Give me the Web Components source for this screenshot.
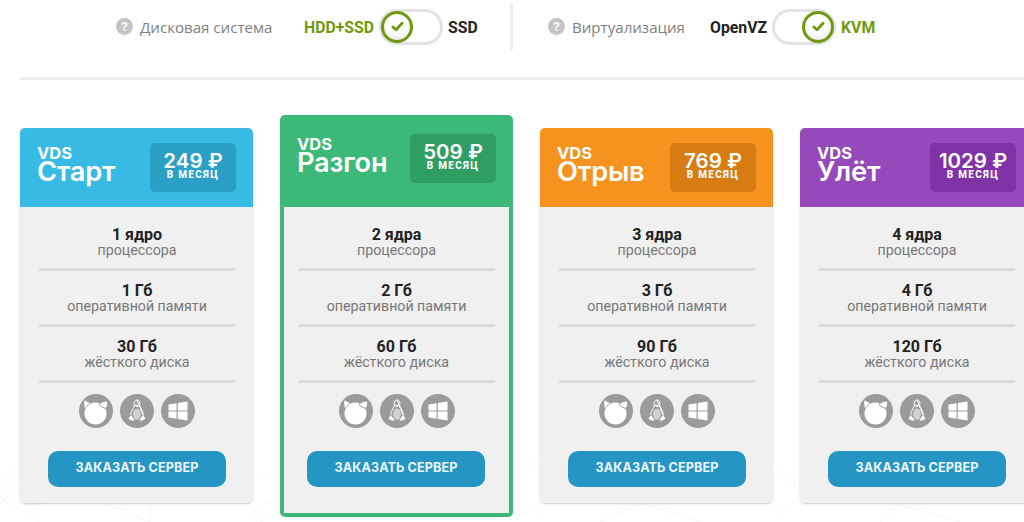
<!DOCTYPE html>
<html lang="ru">
<head>
<meta charset="utf-8">
<title>VDS</title>
<style>
  html, body { margin: 0; height: 522px; overflow: hidden; background: #fff; }
  body { font-family: "Roboto", "Liberation Sans", sans-serif; position: relative; }
</style>
</head>
<body>
<vds-backdrop></vds-backdrop>
<vds-filters>
  <vds-switch label="Дисковая система" left="HDD+SSD" right="SSD" active="left"></vds-switch>
  <vds-switch label="Виртуализация" left="OpenVZ" right="KVM" active="right"></vds-switch>
</vds-filters>
<vds-plans>
  <vds-plan name="Старт" price="249" color="#37bbe4" dark="#2ba0c6" cores="1 ядро" ram="1 Гб" disk="30 Гб"></vds-plan>
  <vds-plan name="Разгон" price="509" color="#3cb878" dark="#2e9e62" cores="2 ядра" ram="2 Гб" disk="60 Гб" featured></vds-plan>
  <vds-plan name="Отрыв" price="769" color="#f6921e" dark="#d67c12" cores="3 ядра" ram="3 Гб" disk="90 Гб"></vds-plan>
  <vds-plan name="Улёт" price="1029" color="#9549ba" dark="#7f33a6" cores="4 ядра" ram="4 Гб" disk="120 Гб"></vds-plan>
</vds-plans>

<script>
class VdsBackdrop extends HTMLElement {
  connectedCallback() {
    this.attachShadow({ mode: 'open' });
    this.shadowRoot.innerHTML = `
      <style>
        :host { position: absolute; left: 0; right: 0; bottom: 0; height: 100px; z-index: 0; }
        svg { display: block; }
      </style>
      <svg width="1024" height="100" viewBox="0 422 1024 100" fill="none" stroke="#f5f5f5" stroke-width="1">
        <path d="M0 505 L18 482 M0 488 L14 470 M40 522 L0 497 M150 522 L95 500 L20 505 M150 522 L150 495 L230 480 L262 522 M262 478 L275 470 M262 505 L275 500"/>
        <path d="M514 478 L538 462 M514 498 L540 515 M600 522 L640 503 L700 522 M775 470 L800 490 M775 515 L798 500 M880 522 L900 505 L960 522"/>
      </svg>`;
  }
}

class VdsFilters extends HTMLElement {
  connectedCallback() {
    this.attachShadow({ mode: 'open' });
    this.shadowRoot.innerHTML = `
      <style>
        :host { display: block; position: relative; z-index: 1; margin-left: 20px; height: 80px; box-sizing: border-box; border-bottom: 3px solid #eeeeee; }
        .row { display: grid; grid-template-columns: 493px 1fr; height: 47px; padding-top: 3px; }
        ::slotted(vds-switch:first-child) { padding-left: 96px; border-right: 3px solid #eeeeee; }
        ::slotted(vds-switch:last-child) { padding-left: 35px; }
      </style>
      <div class="row"><slot></slot></div>`;
  }
}

class VdsSwitch extends HTMLElement {
  connectedCallback() {
    const onRight = this.getAttribute('active') === 'right';
    this.attachShadow({ mode: 'open' });
    this.shadowRoot.innerHTML = `
      <style>
        :host { display: flex; align-items: center; box-sizing: border-box; height: 47px; }
        .help { width: 17px; height: 17px; border-radius: 50%; background: #c4c4c4; color: #fff; font: 700 13px/17px "Roboto", sans-serif; text-align: center; margin-right: 7px; }
        .label { font: 400 15.1px/18px "Open Sans", sans-serif; color: #808080; width: var(--label-w); white-space: nowrap; }
        .opt { font: 700 15.8px/18px "Roboto", sans-serif; color: #222; white-space: nowrap; position: relative; top: 1px; }
        .opt.on { color: #6f9a0e; }
        .track { width: 64px; height: 36px; box-sizing: border-box; margin: 0 5px; border: 3px solid #e3e3e3; border-radius: 18px; background: #fff; display: flex; justify-content: ${onRight ? 'flex-end' : 'flex-start'}; align-items: center; }
        .knob { width: 32px; height: 32px; box-sizing: border-box; margin: ${onRight ? '0 -1px 0 0' : '0 0 0 -1px'}; border: 3px solid #6f9a0e; border-radius: 50%; background: radial-gradient(circle at 50% 35%, #fff 45%, #dededa 100%); display: flex; align-items: center; justify-content: center; }
        svg { display: block; }
      </style>
      <span class="help">?</span>
      <span class="label" style="--label-w:${onRight ? 138 : 164}px">${this.getAttribute('label')}</span>
      <span class="opt ${onRight ? '' : 'on'}">${this.getAttribute('left')}</span>
      <span class="track"><span class="knob">
        <svg width="13" height="11" viewBox="0 0 14 12" fill="none" stroke="#6f9a0e" stroke-width="3" stroke-linecap="round" stroke-linejoin="round"><path d="M2 6.5 L5.4 9.6 L12 2.4"/></svg>
      </span></span>
      <span class="opt ${onRight ? 'on' : ''}">${this.getAttribute('right')}</span>`;
  }
}

class VdsPlans extends HTMLElement {
  connectedCallback() {
    this.attachShadow({ mode: 'open' });
    this.shadowRoot.innerHTML = `
      <style>
        :host { display: block; position: relative; z-index: 1; padding: 48px 0 0 20px; }
        .row { display: grid; grid-template-columns: repeat(4, 233px); column-gap: 27px; align-items: start; width: 1014px; }
      </style>
      <div class="row"><slot></slot></div>`;
  }
}

class VdsOsIcons extends HTMLElement {
  connectedCallback() {
    this.attachShadow({ mode: 'open' });
    this.shadowRoot.innerHTML = `
      <style>
        :host { display: flex; justify-content: center; gap: 7px; height: 34px; }
        span { width: 34px; height: 34px; border-radius: 50%; background: #9b9b9b; display: block; }
        svg { display: block; }
      </style>
      <span><svg width="34" height="34" viewBox="0 0 34 34">
        <circle cx="16.5" cy="19.5" r="11" fill="#fff"/>
        <path fill="#fff" d="M5.4 6.4 C7.4 6.8 9.4 8 10.8 9.6 C8.8 10.6 7.2 12.2 6.2 14.2 C5.2 11.8 4.9 8.8 5.4 6.4 Z"/>
        <path fill="#fff" stroke="#9b9b9b" stroke-width="1" d="M20 10.4 C22.4 7.8 26 6.6 28.6 7 C29 9.4 28.4 12.2 27.2 14.4 C25.4 14.2 22 12.8 20 10.4 Z"/>
      </svg></span>
      <span><svg width="34" height="34" viewBox="0 0 34 34">
        <path fill="none" stroke="#fff" stroke-width="1" stroke-linejoin="round" d="M17 6 C15 6 14 7.6 14.2 9.6 C14.4 11.6 14.2 12.8 13.2 14.4 C11.8 16.6 10.6 18.6 10.8 21.4 M23.2 21.4 C23.4 18.6 22.2 16.6 20.8 14.4 C19.8 12.8 19.6 11.6 19.8 9.6 C20 7.6 19 6 17 6 Z"/>
        <ellipse cx="17" cy="20.2" rx="3.9" ry="5.6" fill="#fff" opacity=".55"/>
        <path fill="#fff" d="M15.2 10.4 C16.2 11.2 17.8 11.2 18.8 10.4 L19 11.8 L17 13 L15 11.8 Z"/>
        <path fill="#fff" d="M11 21.6 C12.4 22.6 13.6 24.6 14.4 26.6 C12.6 27 10.6 26 8.8 25 C8.6 23.6 10 22.6 11 21.6 Z"/>
        <path fill="#fff" d="M23 21.6 C21.6 22.6 20.4 24.6 19.6 26.6 C21.4 27 23.4 26 25.2 25 C25.4 23.6 24 22.6 23 21.6 Z"/>
      </svg></span>
      <span><svg width="34" height="34" viewBox="0 0 34 34" fill="#fff">
        <path d="M7.5 10.4 L15.6 9.2 V16.4 H7.5 Z"/>
        <path d="M16.8 9 L26.5 7.6 V16.4 H16.8 Z"/>
        <path d="M7.5 17.6 H15.6 V24.8 L7.5 23.6 Z"/>
        <path d="M16.8 17.6 H26.5 V26.4 L16.8 25 Z"/>
      </svg></span>`;
  }
}

class VdsPlan extends HTMLElement {
  connectedCallback() {
    const a = n => this.getAttribute(n);
    const featured = this.hasAttribute('featured');
    this.attachShadow({ mode: 'open' });
    this.shadowRoot.innerHTML = `
      <style>
        :host { display: block; box-sizing: border-box; border-radius: 5px; ${featured ? `background: ${a('color')}; margin-top: -13px; padding: 0 4px 4px;` : `background: #f0f0f0; box-shadow: 0 1px 2px rgba(0,0,0,.2);`} }
        header { height: ${featured ? 92 : 79}px; box-sizing: border-box; padding: ${featured ? '22px 13px 0 14px' : '18px 17px 0 18px'}; display: flex; justify-content: space-between; align-items: flex-start; color: #fff; background: ${a('color')}; border-radius: 5px 5px 0 0; }
        .title { font-family: "Inter", "Open Sans", sans-serif; line-height: 1; margin-left: -1px; }
        .vds { display: block; font-size: 16.5px; font-weight: 700; line-height: 14px; }
        .name { display: block; font-size: 27.2px; font-weight: 600; line-height: 24px; letter-spacing: -.2px; }
        .price { width: 86px; height: 49px; margin-top: -3px; border-radius: 5px; background: ${a('dark')}; text-align: center; box-sizing: border-box; padding-top: 9px; }
        .sum { display: block; font: 600 20.5px/18px "Inter", "Open Sans", sans-serif; white-space: nowrap; }
        .per { display: block; font: 800 10px/9px "Roboto", sans-serif; letter-spacing: 1.3px; }
        .body { background: #f0f0f0; box-sizing: border-box; height: ${featured ? 306 : 296}px; padding: ${featured ? '8px 14px 0' : '8px 18px 0 19px'}; ${featured ? '' : 'border-radius: 0 0 4px 4px;'} text-align: center; }
        .spec { height: 56px; box-sizing: border-box; padding-top: 12px; border-bottom: 3px solid #dcdcdc; }
        .spec b { display: block; font: 700 16px/16px "Roboto", sans-serif; color: #222; }
        .spec i { display: block; font: 400 14.2px/15px "Roboto", sans-serif; font-style: normal; color: #777; }
        vds-os-icons { margin-top: 11px; }
        .order { display: block; width: 178px; height: 36px; margin: 23px auto 0; ${featured ? 'margin-left: 9px;' : ''} border: 0; border-radius: 10px; background: #2596c4; color: #eef7fb; font: 700 12.6px/34px "Inter", "Open Sans", sans-serif; letter-spacing: .1px; text-align: center; padding: 0 0 2px; }
      </style>
      <header>
        <div class="title"><span class="vds">VDS</span><span class="name">${a('name')}</span></div>
        <div class="price"><span class="sum">${a('price')} ₽</span><span class="per">В МЕСЯЦ</span></div>
      </header>
      <div class="body">
        <div class="spec"><b>${a('cores')}</b><i>процессора</i></div>
        <div class="spec"><b>${a('ram')}</b><i>оперативной памяти</i></div>
        <div class="spec"><b>${a('disk')}</b><i>жёсткого диска</i></div>
        <vds-os-icons></vds-os-icons>
        <button class="order">ЗАКАЗАТЬ СЕРВЕР</button>
      </div>`;
  }
}

customElements.define('vds-backdrop', VdsBackdrop);
customElements.define('vds-filters', VdsFilters);
customElements.define('vds-switch', VdsSwitch);
customElements.define('vds-plans', VdsPlans);
customElements.define('vds-os-icons', VdsOsIcons);
customElements.define('vds-plan', VdsPlan);
</script>
</body>
</html>
